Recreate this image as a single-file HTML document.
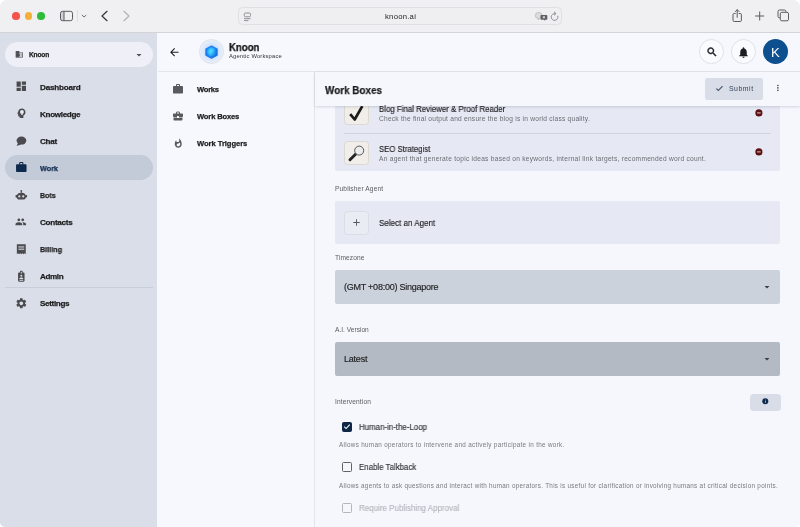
<!DOCTYPE html>
<html lang="en">
<head>
<meta charset="utf-8">
<title>Knoon - Work Boxes</title>
<style>
*{box-sizing:border-box;margin:0;padding:0}
html,body{width:800px;height:527px;overflow:hidden;background:#fff;font-family:"Liberation Sans",sans-serif;color:#1c1c1e}
#win{position:absolute;left:0;top:0;width:800px;height:527px;border-radius:6.5px 6.5px 5px 5px;overflow:hidden;background:#f7f8fd}
.a{position:absolute}
.t{position:absolute;white-space:nowrap;line-height:1em;transform-origin:0 0;z-index:9;will-change:transform}
svg{position:absolute;overflow:visible}
#chrome{position:absolute;left:0;top:0;width:800px;height:33px;background:#f0f0f2;border-bottom:1px solid #d4d4d8}
.tl{position:absolute;top:12.2px;width:7.7px;height:7.7px;border-radius:50%}
#url{position:absolute;left:238.3px;top:7.4px;width:323.4px;height:17.2px;border-radius:4.5px;background:#efeff1;border:1px solid #dfdfe3}
#side{position:absolute;left:0;top:33px;width:157px;height:494px;background:#d9dee8}
#ws{position:absolute;left:5px;top:9px;width:147.5px;height:25px;border-radius:13px;background:#eeeff7}
.pill{position:absolute;left:5px;top:122px;width:147.5px;height:25px;border-radius:13px;background:#c3cad8}
#sdiv{position:absolute;left:5px;top:254px;width:147.5px;height:1px;background:#c7cdd9}
#hdr{position:absolute;left:157.5px;top:33px;width:642.5px;height:38.5px;background:#f7f8fd;border-bottom:1px solid #e3e5ed}
#logo{position:absolute;left:199px;top:39.2px;width:25px;height:25px;border-radius:50%;background:radial-gradient(circle at 50% 50%,#bcd9fb 0%,#cfe2fa 38%,#e4edfa 62%,#eef2fa 80%);border:1px solid #dfe2ea}
.cbtn{position:absolute;top:39.3px;width:24.6px;height:24.6px;border-radius:50%;border:1px solid #dfe1e8;background:#fafbff}
#ava{position:absolute;left:763.2px;top:39.2px;width:25px;height:25px;border-radius:50%;background:#0d4f8f}
#nav2{position:absolute;left:157.5px;top:71.5px;width:157px;height:456px;background:#f7f8fd;border-right:1px solid #e3e5ed}
#main{position:absolute;left:314.5px;top:71.5px;width:485.5px;height:456px;background:#f6f7fd}
#title{position:absolute;left:314.5px;top:72px;width:485.5px;height:33.5px;background:#f6f7fc;box-shadow:0 1px 2.5px rgba(40,50,80,.17);z-index:5}
#submit{position:absolute;left:705px;top:78px;width:58.2px;height:21.5px;border-radius:2.5px;background:#d8dde7;z-index:6}
.card{position:absolute;left:334.5px;width:445.5px;background:#e6e9f3;border-radius:2px}
.sel2{position:absolute;left:334.5px;width:445.5px;height:34px;border-radius:2px}
.thumb{position:absolute;left:344px;width:24.5px;height:24.5px;border-radius:3.5px;background:#f1ede9;border:1px solid #dcd8d4}
.cb{position:absolute;left:341.8px;width:9.8px;height:9.8px;border:1px solid #60636a;border-radius:1.5px}
</style>
</head>
<body>
<div id="win">

<div id="chrome">
  <div class="tl" style="left:12.3px;background:#f5524a"></div>
  <div class="tl" style="left:24.7px;background:#f5ae3a"></div>
  <div class="tl" style="left:37px;background:#2ebd3b"></div>
  <!-- sidebar toggle -->
  <svg style="left:59px;top:10px" width="15" height="12" viewBox="0 0 15 12" fill="none" stroke="#5b5b5f" stroke-width="1"><path d="M3.500 1.300H5v9.400H3.500a2 2 0 0 1-2-2V3.300a2 2 0 0 1 2-2z" fill="#d2d2d6" stroke="none"/><rect x="1.5" y="1.3" width="12" height="9.4" rx="2"/><line x1="5" y1="1.3" x2="5" y2="10.7"/></svg>
  <div class="a" style="left:77px;top:10px;width:1px;height:12px;background:#dedee1"></div>
  <svg style="left:81px;top:14px" width="6" height="4" viewBox="0 0 6 4" fill="none" stroke="#6a6a6e" stroke-width="1"><path d="M.9 1l2.2 2 2.2-2"/></svg>
  <svg style="left:100px;top:10px" width="9" height="12" viewBox="0 0 9 12" fill="none" stroke="#3a3a3d" stroke-width="1.25" stroke-linecap="round" stroke-linejoin="round"><path d="M7 1.3L2 6l5 4.7"/></svg>
  <svg style="left:122px;top:10px" width="9" height="12" viewBox="0 0 9 12" fill="none" stroke="#b4b4b8" stroke-width="1.25" stroke-linecap="round" stroke-linejoin="round"><path d="M2 1.3L7 6l-5 4.7"/></svg>
  <div id="url"></div>
  <!-- reader icon -->
  <svg style="left:243px;top:11.600px" width="9" height="10" viewBox="0 0 9 10" fill="none" stroke="#86868b" stroke-width=".9"><rect x="1.300" y="1" width="6.200" height="3.800" rx="1.200"/><line x1="1" y1="6.700" x2="7.600" y2="6.700"/><line x1="1" y1="8.600" x2="5.400" y2="8.600"/></svg>
  <!-- translate -->
  <svg style="left:535px;top:12px" width="13" height="9" viewBox="0 0 13 9"><path d="M3.6.4a3.3 3.1 0 1 0 0 6.200l-.6 1.200 1.900-1.400A3.300 3.100 0 0 0 3.600.400z" fill="#dcdcdf" stroke="#a9a9ad" stroke-width=".6"/><path d="M6.300 3h5.200a.8.800 0 0 1 .8.800v3.100a.8.800 0 0 1-.8.800h-1.300l-.9 1-.3-1H6.300a.8.800 0 0 1-.8-.8V3.800a.8.800 0 0 1 .8-.8z" fill="#5f5f63"/><rect x="7.800" y="4.300" width="2.200" height="2" fill="#d4d4d7"/></svg>
  <!-- reload -->
  <svg style="left:550px;top:11px" width="10" height="11" viewBox="0 0 10 11" fill="none" stroke="#8a8a8e" stroke-width=".95" stroke-linecap="round"><path d="M5.200 2.600A3.400 3.400 0 1 0 7.900 5.100"/><path d="M4.300 1l1.700 1.600-1.700 1.500"/></svg>
  <!-- share -->
  <svg style="left:731px;top:8px" width="13" height="15" viewBox="0 0 13 15" fill="none" stroke="#5b5b5f" stroke-width="1" stroke-linecap="round" stroke-linejoin="round"><path d="M4.300 5.500H3.200a1.200 1.200 0 0 0-1.200 1.200v5.600a1.200 1.200 0 0 0 1.200 1.200h6a1.200 1.200 0 0 0 1.200-1.200V6.700a1.200 1.200 0 0 0-1.200-1.200H8.100"/><path d="M6.200 9.300V1.900M4.300 3.600l1.900-1.900 1.900 1.900"/></svg>
  <!-- plus -->
  <svg style="left:755px;top:11px" width="10" height="10" viewBox="0 0 10 10" fill="none" stroke="#5b5b5f" stroke-width="1" stroke-linecap="round"><path d="M4.700.9v8.200M.600 5h8.200"/></svg>
  <!-- tabs -->
  <svg style="left:777px;top:9px" width="13" height="13" viewBox="0 0 13 13" fill="none" stroke="#5b5b5f" stroke-width="1"><path d="M3 8.800H2.400A1.400 1.400 0 0 1 1 7.400V2.400A1.400 1.400 0 0 1 2.400 1h5A1.400 1.400 0 0 1 8.800 2.400V3"/><rect x="3.300" y="3.300" width="8.200" height="8.500" rx="1.500"/></svg>
</div>

<div id="side">
  <div id="ws"></div>
  <div class="pill"></div>
  <div id="sdiv"></div>
</div>
<!-- sidebar icons -->
<svg style="left:15.100px;top:49.700px" width="8.600" height="8.600" viewBox="0 0 24 24" fill="#4a4a4e"><rect x="2.500" y="3.500" width="9" height="17" opacity=".75"/><path d="M12 7V3H2v18h20V7H12zM6 19H4v-2h2v2zm0-4H4v-2h2v2zm0-4H4V9h2v2zm0-4H4V5h2v2zm4 12H8v-2h2v2zm0-4H8v-2h2v2zm0-4H8V9h2v2zm0-4H8V5h2v2zm10 12h-8v-2h2v-2h-2v-2h2v-2h-2V9h8v10zm-2-8h-2v2h2v-2zm0 4h-2v2h2v-2z"/></svg>
<svg style="left:133px;top:48.500px" width="12" height="12" viewBox="0 0 24 24" fill="#4d4d50"><path d="M7 10l5 5 5-5z"/></svg>
<svg style="left:14.80px;top:80.20px" width="12.6" height="12.6" viewBox="0 0 24 24" fill="#4b4b4f"><path d="M3 13h8V3H3v10zm0 8h8v-6H3v6zm10 0h8V11h-8v10zm0-18v6h8V3h-8z"/></svg>
<svg style="left:14.80px;top:107.40px" width="12.6" height="12.6" viewBox="0 0 24 24" fill="#4b4b4f"><path d="M13 3C9.250 3 6.200 5.940 6.020 9.640L4.100 12.200c-.250.330-.010.800.400.800H6v3c0 1.100.900 2 2 2h1v3h7v-4.680c2.360-1.120 4-3.530 4-6.320 0-3.870-3.130-7-7-7z"/><circle cx="13.200" cy="9.600" r="3.700" fill="#e9ecf3"/><rect x="11.700" y="12.600" width="3" height="2.300" fill="#e9ecf3"/></svg>
<svg style="left:14.80px;top:134.70px" width="12.6" height="12.6" viewBox="0 0 24 24" fill="#4b4b4f"><ellipse cx="12.300" cy="10.600" rx="9.300" ry="7.600"/><path d="M6 15L3 20.800 11.500 18z"/></svg>
<svg style="left:14.80px;top:161.40px" width="12.6" height="12.6" viewBox="0 0 24 24" fill="#0f2a4d"><path d="M20 6h-4V4c0-1.110-.89-2-2-2h-4c-1.110 0-2 .89-2 2v2H4c-1.110 0-1.990.89-1.990 2L2 19c0 1.110.89 2 2 2h16c1.110 0 2-.89 2-2V8c0-1.110-.89-2-2-2zm-6 0h-4V4h4v2z"/></svg>
<svg style="left:14.80px;top:188.70px" width="12.6" height="12.6" viewBox="0 0 24 24" fill="#4b4b4f"><circle cx="12" cy="3.600" r="1.700"/><rect x="11.200" y="4" width="1.600" height="4"/><path d="M12 7.200c-4.600 0-8.200 3-8.200 7.300 0 .5.050 1 .15 1.500H2.200c-.7 0-1.200-.5-1.200-1.200v-2.200c0-.7.500-1.200 1.200-1.200h1.900zM12 7.200c4.600 0 8.200 3 8.200 7.300 0 .5-.050 1-.15 1.500h1.750c.7 0 1.200-.5 1.200-1.200v-2.200c0-.7-.5-1.200-1.200-1.200h-1.900z"/><path d="M12 7.200c-5 0-9 3-9 7.400 0 3.400 2.600 5.400 5 5.400h8c2.400 0 5-2 5-5.400 0-4.400-4-7.400-9-7.400z"/><circle cx="8.300" cy="14.200" r="2.100" fill="#d9dee8"/><circle cx="15.700" cy="14.200" r="2.100" fill="#d9dee8"/></svg>
<svg style="left:15.30px;top:215.70px" width="11.6" height="11.6" viewBox="0 0 24 24" fill="#4b4b4f"><path d="M16 11c1.660 0 2.990-1.340 2.990-3S17.660 5 16 5c-1.660 0-3 1.340-3 3s1.340 3 3 3zm-8 0c1.660 0 2.990-1.340 2.990-3S9.660 5 8 5C6.340 5 5 6.340 5 8s1.340 3 3 3zm0 2c-2.330 0-7 1.170-7 3.500V19h14v-2.500c0-2.330-4.670-3.500-7-3.500zm8 0c-.29 0-.62.020-.97.050 1.160.84 1.970 1.970 1.970 3.450V19h6v-2.500c0-2.330-4.670-3.500-7-3.500z"/></svg>
<svg style="left:14.80px;top:242.70px" width="12.6" height="12.6" viewBox="0 0 24 24" fill="#4b4b4f"><path d="M3.500 2.500h17V21.500l-2.100-1.800-2.100 1.800-2.200-1.800-2.100 1.800-2.100-1.800-2.200 1.800-2.100-1.800-2.100 1.800z"/><rect x="6.500" y="6.500" width="11" height="2" fill="#d9dee8"/><rect x="6.500" y="10.800" width="11" height="2" fill="#d9dee8"/></svg>
<svg style="left:14.80px;top:269.70px" width="12.6" height="12.6" viewBox="0 0 24 24" fill="#4b4b4f"><path fill-rule="evenodd" d="M10.400 1.500h3.200c.6 0 1 .4 1 1V4.800h1.600c1.100 0 2 .9 2 2v13.400c0 1.100-.9 2-2 2H7.800c-1.100 0-2-.9-2-2V6.800c0-1.100.9-2 2-2h1.600V2.500c0-.6.400-1 1-1zM11.100 3.200v3.400h1.800V3.200zM12 9.200a1.900 1.900 0 1 0 0 3.800 1.900 1.900 0 0 0 0-3.800zM8.400 16.400v1.200h7.200v-1.200c0-1.300-2.400-2-3.600-2s-3.600.7-3.600 2zM8.400 19v1.300h7.200V19z"/></svg>
<svg style="left:14.80px;top:297.00px" width="12.6" height="12.6" viewBox="0 0 24 24" fill="#4b4b4f"><path d="M19.14 12.940c.040-.300.060-.610.060-.940 0-.320-.020-.640-.070-.940l2.030-1.580c.180-.140.230-.410.120-.610l-1.920-3.320c-.120-.220-.370-.290-.590-.220l-2.390.960c-.500-.380-1.030-.700-1.620-.940l-.360-2.540c-.040-.240-.240-.410-.480-.410h-3.840c-.240 0-.430.170-.470.410l-.360 2.540c-.590.240-1.130.570-1.620.940l-2.390-.960c-.220-.080-.470 0-.590.220L2.740 8.870c-.120.210-.080.470.120.610l2.030 1.580c-.050.300-.090.630-.090.940s.020.640.070.940l-2.030 1.580c-.180.140-.230.410-.120.610l1.920 3.320c.120.220.370.290.590.220l2.390-.960c.500.380 1.030.700 1.620.940l.360 2.540c.050.240.240.410.480.410h3.840c.240 0 .440-.170.470-.410l.360-2.540c.590-.240 1.130-.560 1.620-.940l2.390.960c.220.080.470 0 .590-.220l1.920-3.320c.120-.220.070-.470-.120-.610l-2.010-1.580zM12 15.600c-1.980 0-3.600-1.620-3.600-3.600s1.620-3.600 3.600-3.600 3.600 1.620 3.600 3.600-1.620 3.600-3.600 3.600z"/></svg>

<div id="hdr"></div>
<svg style="left:168.400px;top:45.900px" width="12.600" height="12.600" viewBox="0 0 24 24" fill="#1d1d1f"><path d="M20 11H7.830l5.590-5.590L12 4l-8 8 8 8 1.410-1.410L7.830 13H20v-2z"/></svg>
<div id="logo"></div>
<svg style="left:204px;top:44.600px" width="15" height="14.200" viewBox="0 0 28 29" preserveAspectRatio="none"><defs><radialGradient id="cg" cx="48%" cy="46%" r="52%"><stop offset="0" stop-color="#52e8ff"/><stop offset=".45" stop-color="#35c4fd"/><stop offset=".8" stop-color="#2088f4"/><stop offset="1" stop-color="#1b6fe4"/></radialGradient></defs><path d="M14 2l10.400 6v13L14 27 3.600 21V8z" fill="url(#cg)" stroke="#1f7df1" stroke-width="2.400" stroke-linejoin="round"/><path d="M14 14.500V27l10.400-6V8z" fill="#0f55c8" opacity=".22"/></svg>
<div class="cbtn" style="left:699.400px"></div>
<div class="cbtn" style="left:731.400px"></div>
<svg style="left:705.700px;top:45.700px" width="12" height="12" viewBox="0 0 24 24" fill="#1d1d1f" stroke="#1d1d1f" stroke-width=".9"><path d="M15.500 14h-.790l-.280-.270C15.410 12.590 16 11.110 16 9.500 16 5.910 13.090 3 9.500 3S3 5.910 3 9.500 5.910 16 9.500 16c1.610 0 3.090-.590 4.230-1.570l.270.280v.790l5 4.990L20.490 19l-4.990-5zm-6 0C7.010 14 5 11.990 5 9.500S7.010 5 9.500 5 14 7.010 14 9.500 11.990 14 9.500 14z"/></svg>
<svg style="left:737.200px;top:45.600px" width="13" height="13" viewBox="0 0 24 24" fill="#1d1d1f"><path d="M12 22c1.100 0 2-.900 2-2h-4c0 1.100.890 2 2 2zm6-6v-5c0-3.070-1.640-5.640-4.500-6.320V4c0-.830-.670-1.500-1.500-1.500s-1.500.670-1.500 1.500v.680C7.630 5.360 6 7.920 6 11v5l-2 2v1h16v-1l-2-2z"/></svg>
<div id="ava"></div>

<div id="nav2"></div>
<svg style="left:172.300px;top:83.300px" width="12" height="12" viewBox="0 0 24 24" fill="#5a5a5e"><path d="M20 6h-4V4c0-1.110-.89-2-2-2h-4c-1.110 0-2 .89-2 2v2H4c-1.110 0-1.990.89-1.990 2L2 19c0 1.110.89 2 2 2h16c1.110 0 2-.89 2-2V8c0-1.110-.89-2-2-2zm-6 0h-4V4h4v2z"/></svg>
<svg style="left:172.300px;top:110.300px" width="12" height="12" viewBox="0 0 24 24" fill="#5a5a5e"><path d="M10 16v-1H3.010L3 19c0 1.110.890 2 2 2h14c1.110 0 2-.890 2-2v-4h-7v1h-4zm10-9h-4.010V5l-2-2h-4l-2 2v2H4c-1.100 0-2 .900-2 2v3c0 1.110.890 2 2 2h6v-2h4v2h6c1.100 0 2-.900 2-2V9c0-1.100-.900-2-2-2zm-6 0h-4V5h4v2z"/></svg>
<svg style="left:173.050px;top:138.100px" width="10.500" height="10.500" viewBox="0 0 24 24" fill="#5a5a5e"><path d="M13.500.670s.740 2.650.740 4.800c0 2.060-1.350 3.730-3.410 3.730-2.070 0-3.630-1.670-3.630-3.730l.030-.360C5.210 7.510 4 10.620 4 14c0 4.420 3.580 8 8 8s8-3.580 8-8C20 8.610 17.410 3.800 13.500.670zM11.710 19c-1.780 0-3.220-1.400-3.220-3.140 0-1.620 1.050-2.760 2.810-3.120 1.770-.360 3.600-1.210 4.620-2.580.390 1.290.590 2.650.590 4.040 0 2.650-2.150 4.800-4.800 4.800z"/></svg>

<div id="main"></div>
<!-- cards -->
<div class="card" style="top:95px;height:76px"></div>
<div class="thumb" style="top:100.800px"></div>
<div class="a" style="left:344px;top:133px;width:427px;height:1px;background:#d2d5de"></div>
<div class="thumb" style="top:140.700px"></div>
<svg style="left:347px;top:103px" width="19" height="19" viewBox="0 0 19 19" fill="none" stroke="#1b1b1d" stroke-width="2.700" stroke-linecap="butt" stroke-linejoin="round"><path d="M3.200 11.200l4.500 5.300 7.600-13.400"/></svg>
<svg style="left:346px;top:143px" width="20" height="20" viewBox="0 0 20 20"><line x1="9.800" y1="11" x2="4" y2="16.800" stroke="#232325" stroke-width="2.900" stroke-linecap="round"/><circle cx="13.200" cy="7.600" r="4.500" fill="#ececee" stroke="#55575c" stroke-width="1"/></svg>
<svg style="left:754.700px;top:108.800px" width="7.800" height="7.800" viewBox="0 0 24 24" fill="#5c1013"><circle cx="12" cy="12" r="11"/><rect x="6.500" y="10.500" width="11" height="3" fill="#e9d2d2"/></svg>
<svg style="left:754.700px;top:148.400px" width="7.800" height="7.800" viewBox="0 0 24 24" fill="#5c1013"><circle cx="12" cy="12" r="11"/><rect x="6.500" y="10.500" width="11" height="3" fill="#e9d2d2"/></svg>

<div id="title"></div>
<div id="submit"></div>
<svg style="left:714.800px;top:83.700px;z-index:7" width="8.800" height="8.800" viewBox="0 0 24 24" fill="#34435c" stroke="#34435c" stroke-width="1"><path d="M9 16.170L4.830 12l-1.420 1.410L9 19 21 7l-1.410-1.410z"/></svg>
<svg style="left:773.200px;top:83.400px;z-index:7" width="9.800" height="9.800" viewBox="0 0 24 24" fill="#2f3b52"><path d="M12 8c1.100 0 2-.900 2-2s-.900-2-2-2-2 .900-2 2 .900 2 2 2zm0 2c-1.100 0-2 .900-2 2s.900 2 2 2 2-.900 2-2-.900-2-2-2zm0 6c-1.100 0-2 .900-2 2s.900 2 2 2 2-.900 2-2-.900-2-2-2z"/></svg>

<div class="card" style="top:201.200px;height:43.300px"></div>
<div class="thumb" style="top:210.700px;background:#eaecf4;border-color:#dadde6"></div>
<svg style="left:350.700px;top:217.400px" width="11" height="11" viewBox="0 0 24 24" fill="#55575d"><path d="M19 13h-6v6h-2v-6H5v-2h6V5h2v6h6v2z"/></svg>

<div class="sel2" style="top:270px;background:#ccd2dc"></div>
<svg style="left:760.500px;top:281px" width="12" height="12" viewBox="0 0 24 24" fill="#3c3e44"><path d="M7 10l5 5 5-5z"/></svg>
<div class="sel2" style="top:342px;background:#b4bac3"></div>
<svg style="left:760.500px;top:353px" width="12" height="12" viewBox="0 0 24 24" fill="#3c3e44"><path d="M7 10l5 5 5-5z"/></svg>

<div class="a" style="left:750px;top:393.800px;width:30.500px;height:17px;border-radius:3.500px;background:#d8dde7"></div>
<svg style="left:762px;top:398.100px" width="6.600" height="6.600" viewBox="0 0 24 24" fill="#0f2a4d"><circle cx="12" cy="12" r="11"/><rect x="10.800" y="10.500" width="2.600" height="7" fill="#d8dde7"/><rect x="10.800" y="6.200" width="2.600" height="2.600" fill="#d8dde7"/></svg>

<div class="cb" style="top:422px;background:#0f2747;border-color:#0f2747"></div>
<svg style="left:342.800px;top:423px" width="7.800" height="7.800" viewBox="0 0 24 24" fill="none" stroke="#fff" stroke-width="3.400" stroke-linecap="square"><path d="M5 12.500l4.500 4.500L19.500 6.500"/></svg>
<div class="cb" style="top:462.400px"></div>
<div class="cb" style="top:503px;border-color:#b3b6bd"></div>

<div class="t" style="left:385.40px;top:13px;font-size:7.7px;color:#1f1f21;letter-spacing:0.253px;">knoon.ai</div>
<div class="t" style="left:29.00px;top:52px;font-size:6.6px;color:#222;font-weight:bold;-webkit-text-stroke:.25px;letter-spacing:-0.175px;">Knoon</div>
<div class="t" style="left:39.50px;top:84px;font-size:8.1px;color:#1d1d1f;font-weight:bold;-webkit-text-stroke:.25px;letter-spacing:-0.187px;">Dashboard</div>
<div class="t" style="left:39.50px;top:111px;font-size:8.1px;color:#1d1d1f;font-weight:bold;-webkit-text-stroke:.25px;letter-spacing:-0.319px;">Knowledge</div>
<div class="t" style="left:39.50px;top:138px;font-size:8.1px;color:#1d1d1f;font-weight:bold;-webkit-text-stroke:.25px;letter-spacing:-0.225px;">Chat</div>
<div class="t" style="left:39.50px;top:165px;font-size:8.1px;color:#0f2a4d;font-weight:bold;-webkit-text-stroke:.25px;transform:scaleX(0.8958);">Work</div>
<div class="t" style="left:39.50px;top:192px;font-size:8.1px;color:#1d1d1f;font-weight:bold;-webkit-text-stroke:.25px;transform:scaleX(0.8722);">Bots</div>
<div class="t" style="left:39.50px;top:219px;font-size:8.1px;color:#1d1d1f;font-weight:bold;-webkit-text-stroke:.25px;letter-spacing:-0.268px;">Contacts</div>
<div class="t" style="left:39.50px;top:246px;font-size:8.1px;color:#1d1d1f;font-weight:bold;-webkit-text-stroke:.25px;transform:scaleX(0.8935);">Billing</div>
<div class="t" style="left:39.50px;top:273px;font-size:8.1px;color:#1d1d1f;font-weight:bold;-webkit-text-stroke:.25px;letter-spacing:-0.397px;">Admin</div>
<div class="t" style="left:39.50px;top:300px;font-size:8.1px;color:#1d1d1f;font-weight:bold;-webkit-text-stroke:.25px;letter-spacing:-0.342px;">Settings</div>
<div class="t" style="left:229.00px;top:42px;font-size:10.9px;color:#111;font-weight:bold;-webkit-text-stroke:.25px;transform:scaleX(0.8816);">Knoon</div>
<div class="t" style="left:229.00px;top:54px;font-size:5.8px;color:#333;letter-spacing:0.180px;">Agentic Workspace</div>
<div class="t" style="left:771.20px;top:46px;font-size:13.2px;color:#fff;letter-spacing:0.303px;">K</div>
<div class="t" style="left:196.50px;top:86px;font-size:7.6px;color:#1d1d1f;font-weight:bold;-webkit-text-stroke:.25px;letter-spacing:-0.266px;">Works</div>
<div class="t" style="left:196.50px;top:113px;font-size:7.6px;color:#1d1d1f;font-weight:bold;-webkit-text-stroke:.25px;letter-spacing:-0.165px;">Work Boxes</div>
<div class="t" style="left:196.50px;top:140px;font-size:7.6px;color:#1d1d1f;font-weight:bold;-webkit-text-stroke:.25px;letter-spacing:-0.048px;">Work Triggers</div>
<div class="t" style="left:325.00px;top:85px;font-size:11px;color:#1d1d1f;font-weight:bold;-webkit-text-stroke:.25px;transform:scaleX(0.8994);">Work Boxes</div>
<div class="t" style="left:728.60px;top:86px;font-size:6.9px;color:#34435c;letter-spacing:0.524px;">Submit</div>
<div class="t" style="left:378.75px;top:105px;font-size:9px;color:#1d1d1f;-webkit-text-stroke:.15px;transform:scaleX(0.8732);">Blog Final Reviewer &amp; Proof Reader</div>
<div class="t" style="left:378.75px;top:116px;font-size:6.6px;color:#6b6d73;letter-spacing:0.244px;">Check the final output and ensure the blog is in world class quality.</div>
<div class="t" style="left:378.75px;top:145px;font-size:9px;color:#1d1d1f;-webkit-text-stroke:.15px;transform:scaleX(0.8609);">SEO Strategist</div>
<div class="t" style="left:378.75px;top:156px;font-size:6.6px;color:#6b6d73;letter-spacing:0.272px;">An agent that generate topic ideas based on keywords, internal link targets, recommended word count.</div>
<div class="t" style="left:334.50px;top:186px;font-size:6.6px;color:#5a5c62;letter-spacing:0.136px;">Publisher Agent</div>
<div class="t" style="left:378.75px;top:219px;font-size:9px;color:#1d1d1f;-webkit-text-stroke:.15px;transform:scaleX(0.8920);">Select an Agent</div>
<div class="t" style="left:334.50px;top:255px;font-size:6.6px;color:#5a5c62;letter-spacing:0.098px;">Timezone</div>
<div class="t" style="left:343.75px;top:283px;font-size:9px;color:#1d1d1f;-webkit-text-stroke:.15px;letter-spacing:-0.245px;">(GMT +08:00) Singapore</div>
<div class="t" style="left:334.50px;top:327px;font-size:6.6px;color:#5a5c62;letter-spacing:0.003px;">A.I. Version</div>
<div class="t" style="left:343.75px;top:355px;font-size:9px;color:#1d1d1f;-webkit-text-stroke:.15px;letter-spacing:-0.214px;">Latest</div>
<div class="t" style="left:334.50px;top:399px;font-size:6.6px;color:#5a5c62;letter-spacing:0.128px;">Intervention</div>
<div class="t" style="left:359.00px;top:423px;font-size:8.7px;color:#303238;-webkit-text-stroke:.15px;transform:scaleX(0.9084);">Human-in-the-Loop</div>
<div class="t" style="left:339.25px;top:442px;font-size:6.3px;color:#77797f;letter-spacing:0.324px;">Allows human operators to intervene and actively participate in the work.</div>
<div class="t" style="left:359.00px;top:463px;font-size:8.7px;color:#303238;-webkit-text-stroke:.15px;transform:scaleX(0.9072);">Enable Talkback</div>
<div class="t" style="left:339.25px;top:483px;font-size:6.3px;color:#77797f;letter-spacing:0.299px;">Allows agents to ask questions and interact with human operators. This is useful for clarification or involving humans at critical decision points.</div>
<div class="t" style="left:359.00px;top:504px;font-size:8.7px;color:#b3b6bd;-webkit-text-stroke:.15px;transform:scaleX(0.9184);">Require Publishing Approval</div>

</div>
</body>
</html>
